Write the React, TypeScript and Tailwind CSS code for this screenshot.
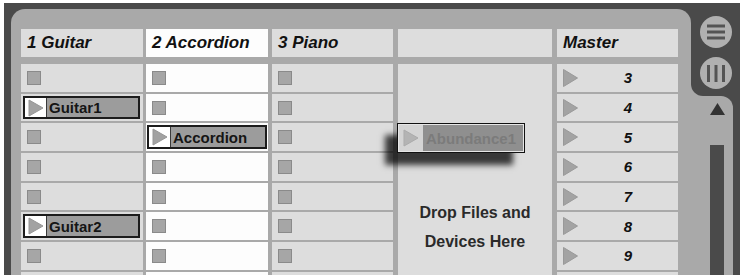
import React from "react";

function Slot({ white }: { white?: boolean }) {
  return (
    <div
      className={
        white
          ? "h-[27.7px] bg-[#fdfdfd] flex items-center pl-[6px]"
          : "h-[27.7px] bg-[#dddddd] flex items-center pl-[6px]"
      }
    >
      <div className="w-[14px] h-[14px] bg-[#a6a6a6] border border-[#8a8a8a]" />
    </div>
  );
}

function PlayTri({ fill = "#a2a2a2", stroke = "#969696" }: { fill?: string; stroke?: string }) {
  return (
    <svg width="16" height="18" viewBox="0 0 16 18">
      <polygon points="1,1 15,9 1,17" fill={fill} stroke={stroke} strokeWidth="1" />
    </svg>
  );
}

function ClipCell({ name, white }: { name: string; white?: boolean }) {
  return (
    <div
      className={
        white
          ? "h-[27.7px] bg-[#fdfdfd] pl-[1px] pr-[1px] py-[2px]"
          : "h-[27.7px] bg-[#dddddd] pl-[2px] pr-[3px] py-[2px]"
      }
    >
      <div className="flex h-full w-full border-2 border-[#1c1c1c] bg-[#9c9c9c]">
        <div className="w-[22px] bg-white border-r border-[#3a3a3a] flex items-center justify-center shrink-0">
          <PlayTri />
        </div>
        <span className="pl-[2px] flex items-center text-[15px] font-bold leading-none text-[#151515]">
          {name}
        </span>
      </div>
    </div>
  );
}

type Cell = { clip?: string };

function TrackColumn({
  title,
  white,
  cells,
  cls,
}: {
  title: string;
  white?: boolean;
  cells: Cell[];
  cls: string;
}) {
  return (
    <div className={cls}>
      <div
        className={
          white
            ? "h-[28px] flex items-center pl-[6px] text-[17px] font-bold italic text-[#111] bg-[#fdfdfd]"
            : "h-[28px] flex items-center pl-[6px] text-[17px] font-bold italic text-[#111] bg-[#dddddd]"
        }
      >
        {title}
      </div>
      <div className="mt-[7px] flex flex-col gap-[2px]">
        {cells.map((c, i) =>
          c.clip ? <ClipCell key={i} name={c.clip} white={white} /> : <Slot key={i} white={white} />
        )}
      </div>
    </div>
  );
}

export default function App() {
  const empty: Cell[] = Array.from({ length: 8 }, () => ({}));
  const col1: Cell[] = [{}, { clip: "Guitar1" }, {}, {}, {}, { clip: "Guitar2" }, {}, {}];
  const col2: Cell[] = [{}, {}, { clip: "Accordion" }, {}, {}, {}, {}, {}];
  const masterNums = [3, 4, 5, 6, 7, 8, 9];

  return (
    <div className="w-[740px] h-[275px] overflow-hidden bg-white pt-[3px] pl-[4px] font-['Liberation_Sans',Arial,sans-serif]">
      <div className="flex h-[272px] w-[736px] bg-[#4a4a4a] pt-[6px] pl-[7px]">
        {/* Main session panel */}
        <div className="w-[680px] h-[420px] shrink-0 rounded-t-[14px] bg-[#a9a9a9] pt-[20px] pl-[10px] flex">
          <TrackColumn title="1 Guitar" cells={col1} cls="w-[122px] shrink-0" />
          <TrackColumn title="2 Accordion" white cells={col2} cls="w-[122px] ml-[3px] shrink-0" />
          <TrackColumn title="3 Piano" cells={empty} cls="w-[121px] ml-[4px] shrink-0" />

          {/* Drop area */}
          <div className="w-[154px] ml-[5px] shrink-0 flex flex-col">
            <div className="h-[28px] bg-[#dddddd]" />
            <div className="mt-[7px] relative bg-[#dddddd] h-[320px] pt-[134px] text-center text-[16px] leading-[29px] font-bold text-[#2a2a2a]">
              <div>Drop Files and</div>
              <div>Devices Here</div>
              <div className="absolute left-[-1px] top-[59px] w-[128px] h-[30px] border border-[#111] bg-[#e6e6e6] shadow-[-12px_12px_6px_rgba(0,0,0,0.75)]">
                <div className="flex h-full border border-[#e6e6e6]">
                  <div className="w-[24px] bg-[#d4d4d4] flex items-center justify-center shrink-0">
                    <PlayTri fill="#b4b4b4" stroke="#ababab" />
                  </div>
                  <div className="flex-1 bg-[#8f8f8f] pl-[3px] flex items-center text-[15px] font-bold leading-none text-[#7b7b7b] text-left">
                    Abundance1
                  </div>
                </div>
              </div>
            </div>
          </div>

          {/* Master */}
          <div className="w-[121px] ml-[5px] shrink-0">
            <div className="h-[28px] flex items-center pl-[6px] text-[17px] font-bold italic text-[#111] bg-[#dddddd]">
              Master
            </div>
            <div className="mt-[7px] flex flex-col gap-[2px]">
              {masterNums.map((n) => (
                <div key={n} className="h-[27.7px] bg-[#dddddd] flex items-center pl-[6px]">
                  <svg width="15" height="18" viewBox="0 0 15 18" className="shrink-0">
                    <polygon points="0.5,0.5 14.5,9 0.5,17.5" fill="#a3a3a3" stroke="#999999" strokeWidth="1" />
                  </svg>
                  <span className="flex-1 text-center text-[15px] font-bold italic text-[#111] leading-none">
                    {n}
                  </span>
                </div>
              ))}
              <div className="h-[27.7px] bg-[#dddddd]" />
            </div>
          </div>
        </div>

        {/* Right side controls */}
        <div className="w-[42px] shrink-0 flex flex-col">
          <div className="bg-[#a9a9a9]">
            <div className="h-[87px] bg-[#4a4a4a] rounded-bl-[12px] pl-[9px] pt-[7px] flex flex-col gap-[9px]">
              <svg width="32" height="32" viewBox="0 0 32 32">
                <circle cx="16" cy="16" r="16" fill="#b0b0b0" />
                <rect x="7" y="8.5" width="18" height="3" fill="#545454" />
                <rect x="7" y="14.5" width="18" height="3" fill="#545454" />
                <rect x="7" y="20.5" width="18" height="3" fill="#545454" />
              </svg>
              <svg width="32" height="32" viewBox="0 0 32 32">
                <circle cx="16" cy="16" r="16" fill="#b0b0b0" />
                <rect x="7" y="8" width="3" height="17" fill="#545454" />
                <rect x="14.5" y="8" width="3" height="17" fill="#545454" />
                <rect x="22" y="8" width="3" height="17" fill="#545454" />
              </svg>
            </div>
          </div>
          <div className="flex-1 bg-[#a9a9a9] rounded-tr-[12px] pl-[19px] pt-[7px] flex flex-col">
            <svg width="15" height="12" viewBox="0 0 15 12">
              <polygon points="7.5,0 15,12 0,12" fill="#333333" />
            </svg>
            <div className="mt-[30px] w-[14px] flex-1 bg-[#4a4a4a]" />
          </div>
        </div>
      </div>
    </div>
  );
}
